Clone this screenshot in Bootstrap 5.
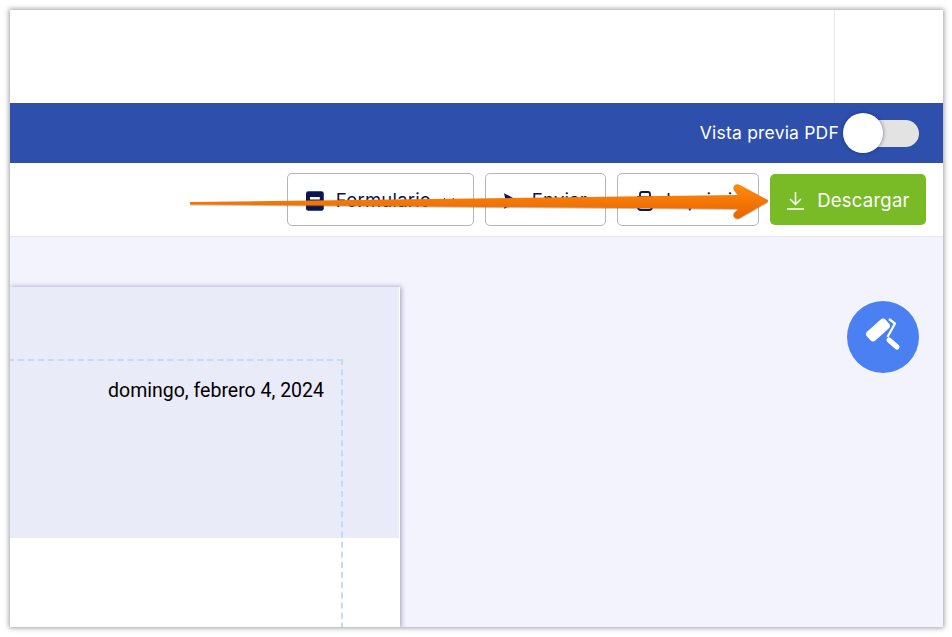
<!DOCTYPE html>
<html lang="es">
  <head>
    <title>Vista previa</title>
    <link href="https://cdn.jsdelivr.net/npm/bootstrap@5.3.3/dist/css/bootstrap.min.css" rel="stylesheet">
    <style>
      html, body { height: 100%; }
      body {
        background: #fff;
        font-family: Inter, "Liberation Sans", sans-serif;
        padding: 10px 9px 9px 10px;
        overflow: hidden;
      }
      .app-window {
        height: 617px;
        box-shadow: 0 0 5px 1px rgba(0, 0, 0, .38);
        position: relative;
        overflow: hidden;
      }
      .top-blank { height: 93px; padding-right: 108px; }
      .top-rule { width: 1px; height: 100%; background: #e8e8ea; }
      .blue-bar { height: 60px; background: #2e50ac; color: #fff; padding-right: 24px; font-size: 17.5px; letter-spacing: .2px; }
      .pdf-switch { width: 76px; height: 40px; margin-left: 4px; position: relative; }
      .pdf-track { position: absolute; right: 0; top: 7px; width: 70px; height: 27px; border-radius: 14px; background: #e3e3e3; }
      .pdf-knob { position: absolute; left: 0; top: 0; width: 40px; height: 40px; border-radius: 50%; background: #fff; box-shadow: 0 0 4px rgba(20, 30, 90, .55); }
      .tool-bar { height: 74px; border-bottom: 1px solid #e8e8ee; padding-right: 17px; gap: 11px; }
      .tool-btn {
        height: 53px; border: 1px solid #b4b4bc; border-radius: 5px; background: #fff;
        color: #0a1551; font-size: 18.5px; letter-spacing: .2px; padding: 3px 18px 0; gap: 12px;
      }
      .btn-form { width: 187px; }
      .btn-send { width: 121px; gap: 13px; }
      .btn-print { width: 142px; gap: 12px; }
      .btn-get { width: 156px; height: 51px; background: #78bb27; color: #fff; border: 0; border-radius: 5px; font-size: 18.5px; gap: 12px; letter-spacing: .25px; padding-top: 3px; }
      .work-area { height: 390px; background: #f2f3fd; padding-top: 50px; position: relative; }
      .sheet { width: 390px; height: 341px; background: #fff; box-shadow: 1px 0 5px rgba(30, 30, 80, .4); position: relative; }
      .sheet-head { height: 251px; width: 389px; background: #e9ebf8; padding: 93px 75px 0 0; font-family: Roboto, sans-serif; font-size: 19.5px; color: #000; text-align: right; line-height: 22px; white-space: nowrap; }
      .dash-box { position: absolute; left: -2px; top: 72px; width: 335px; height: 280px; border: 2px dashed #c3dcf3; border-left: 0; border-bottom: 0; }
      .paint-fab { position: absolute; left: 837px; top: 64px; width: 72px; height: 72px; border-radius: 50%; background: #4a80f2; }
      .arrow-over { position: absolute; left: 170px; top: 165px; filter: drop-shadow(0 1px 0 rgba(90, 90, 90, .35)); }
    </style>
  </head>
  <body>
    <div class="app-window">
      <div class="top-blank d-flex justify-content-end"><div class="top-rule"></div></div>

      <div class="blue-bar d-flex align-items-center justify-content-end">
        <span>Vista previa PDF</span>
        <div class="pdf-switch">
          <div class="pdf-track"></div>
          <div class="pdf-knob"></div>
        </div>
      </div>

      <div class="tool-bar d-flex align-items-center justify-content-end">
        <button class="tool-btn btn-form d-flex align-items-center">
          <svg width="18" height="20" viewBox="0 0 18 20"><rect width="18" height="20" rx="2.500" fill="#0a1551"/><rect x="4" y="6" width="10" height="2.500" fill="#fff"/><rect x="4" y="11" width="10" height="2.500" fill="#fff"/></svg>
          <span>Formulario</span>
          <svg class="ms-auto" width="12" height="8" viewBox="0 0 12 8"><path d="M1 1.500l5 5 5-5" fill="none" stroke="#0a1551" stroke-width="1.600"/></svg>
        </button>
        <button class="tool-btn btn-send d-flex align-items-center">
          <svg width="17" height="18" viewBox="0 0 17 18"><path d="M0 0l17 9L0 18l2-9z" fill="#0a1551"/></svg>
          <span>Enviar</span>
        </button>
        <button class="tool-btn btn-print d-flex align-items-center">
          <svg width="18" height="20" viewBox="0 0 18 20"><path d="M4 6V3q0-2 2-2h6q2 0 2 2v3M1 6h16M2 6v10q0 3 3 3h8q3 0 3-3V6" fill="none" stroke="#0a1551" stroke-width="1.800"/></svg>
          <span>Imprimir</span>
        </button>
        <button class="btn-get d-flex align-items-center justify-content-center">
          <svg width="19" height="19" viewBox="0 0 19 19"><path d="M9.500 1v12M4 8l5.500 5.500L15 8M1 18h17" fill="none" stroke="#fff" stroke-width="1.500"/></svg>
          <span>Descargar</span>
        </button>
      </div>

      <div class="work-area">
        <div class="sheet">
          <div class="sheet-head">domingo, febrero 4, 2024</div>
          <div class="dash-box"></div>
        </div>
        <div class="paint-fab d-flex align-items-center justify-content-center">
          <svg width="40" height="40" viewBox="0 0 40 40"><rect x="2.500" y="7" width="25" height="12" rx="3.500" transform="rotate(-42 15 13)" fill="#fff"/><path d="M26 2l6 4.500-7.500 13.500" fill="none" stroke="#fff" stroke-width="2.200" stroke-linejoin="round"/><path d="M26 23l8 7" stroke="#fff" stroke-width="5" stroke-linecap="round"/></svg>
        </div>
      </div>

      <svg class="arrow-over" width="610" height="60" viewBox="0 0 610 60">
        <defs>
          <linearGradient id="arrowFill" x1="0" y1="0" x2="0" y2="1">
            <stop offset="0" stop-color="#ff8a0c"/>
            <stop offset="1" stop-color="#e86400"/>
          </linearGradient>
        </defs>
        <path d="M10 27L558 20 554 15c-2-4 2-7 6-5l26 14c3 1 3 2 0 4l-26 15c-4 2-8-1-6-5l4-4L10 29.500z" fill="url(#arrowFill)"/>
      </svg>
    </div>
  </body>
</html>
